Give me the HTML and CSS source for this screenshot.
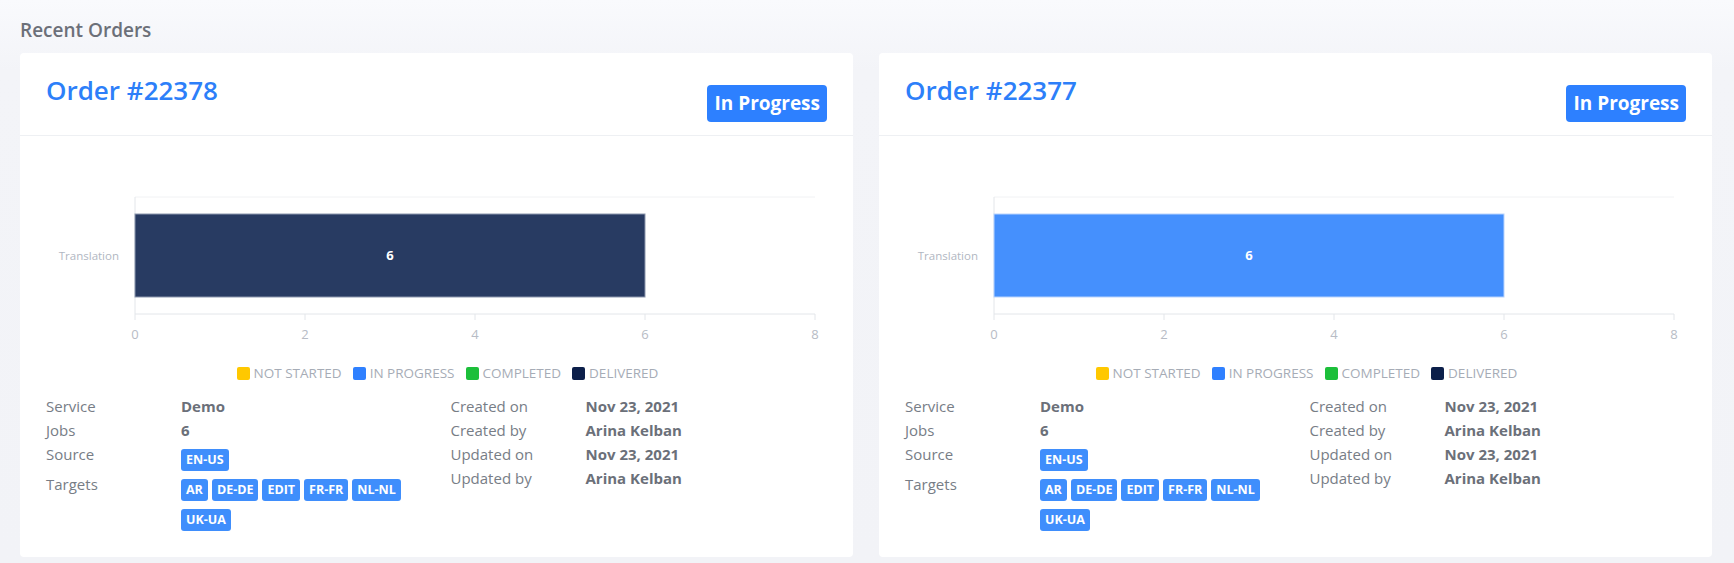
FILE: index.html
```html
<!DOCTYPE html>
<html>

<head>
	<title>Recent Orders</title>
	<link rel="stylesheet" href="styles.css">
</head>

<body>
	<h2 class="page-title">Recent Orders</h2>
	<div class="orders">
		<!-- заказ 22378 -->
		<div class="card">
			<div class="card-header">
				<h3 class="order-title">Order #22378</h3>
				<span class="status">In Progress</span>
			</div>
			<svg class="chart" viewBox="0 0 833 222" width="833" height="222">
				<line class="grid" x1="115" y1="59" x2="795" y2="59" />
				<line class="axis" x1="115" y1="59" x2="115" y2="176" />
				<rect x="115" y="76" width="510" height="83" fill="#283b62" stroke="#8c97ad" stroke-width="1" />
				<text class="bar-value" x="370" y="122">6</text>
				<text class="cat-label" x="99" y="122">Translation</text>
				<line class="axis" x1="115" y1="176" x2="795" y2="176" />
				<g class="ticks">
					<line x1="115" y1="176" x2="115" y2="182" />
					<line x1="285" y1="176" x2="285" y2="182" />
					<line x1="455" y1="176" x2="455" y2="182" />
					<line x1="625" y1="176" x2="625" y2="182" />
					<line x1="795" y1="176" x2="795" y2="182" />
				</g>
				<g class="tick-labels">
					<text x="115" y="201">0</text>
					<text x="285" y="201">2</text>
					<text x="455" y="201">4</text>
					<text x="625" y="201">6</text>
					<text x="795" y="201">8</text>
				</g>
			</svg>
			<div class="legend">
				<span class="legend-item"><i class="dot not-started"></i>NOT STARTED</span>
				<span class="legend-item"><i class="dot in-progress"></i>IN PROGRESS</span>
				<span class="legend-item"><i class="dot completed"></i>COMPLETED</span>
				<span class="legend-item"><i class="dot delivered"></i>DELIVERED</span>
			</div>
			<div class="details">
				<div class="info">
					<div class="label">Service</div>
					<div class="value">Demo</div>
					<div class="label">Jobs</div>
					<div class="value">6</div>
					<div class="label">Source</div>
					<div class="value tags"><span class="tag">EN-US</span></div>
					<div class="label">Targets</div>
					<div class="value tags">
						<span class="tag">AR</span><span class="tag">DE-DE</span><span class="tag">EDIT</span><span class="tag">FR-FR</span><span class="tag">NL-NL</span><span class="tag">UK-UA</span>
					</div>
				</div>
				<div class="info">
					<div class="label">Created on</div>
					<div class="value">Nov 23, 2021</div>
					<div class="label">Created by</div>
					<div class="value">Arina Kelban</div>
					<div class="label">Updated on</div>
					<div class="value">Nov 23, 2021</div>
					<div class="label">Updated by</div>
					<div class="value">Arina Kelban</div>
				</div>
			</div>
		</div>

		<!-- заказ 22377 -->
		<div class="card">
			<div class="card-header">
				<h3 class="order-title">Order #22377</h3>
				<span class="status">In Progress</span>
			</div>
			<svg class="chart" viewBox="0 0 833 222" width="833" height="222">
				<line class="grid" x1="115" y1="59" x2="795" y2="59" />
				<line class="axis" x1="115" y1="59" x2="115" y2="176" />
				<rect x="115" y="76" width="510" height="83" fill="#4590fd" stroke="#b9d4fd" stroke-width="1" />
				<text class="bar-value" x="370" y="122">6</text>
				<text class="cat-label" x="99" y="122">Translation</text>
				<line class="axis" x1="115" y1="176" x2="795" y2="176" />
				<g class="ticks">
					<line x1="115" y1="176" x2="115" y2="182" />
					<line x1="285" y1="176" x2="285" y2="182" />
					<line x1="455" y1="176" x2="455" y2="182" />
					<line x1="625" y1="176" x2="625" y2="182" />
					<line x1="795" y1="176" x2="795" y2="182" />
				</g>
				<g class="tick-labels">
					<text x="115" y="201">0</text>
					<text x="285" y="201">2</text>
					<text x="455" y="201">4</text>
					<text x="625" y="201">6</text>
					<text x="795" y="201">8</text>
				</g>
			</svg>
			<div class="legend">
				<span class="legend-item"><i class="dot not-started"></i>NOT STARTED</span>
				<span class="legend-item"><i class="dot in-progress"></i>IN PROGRESS</span>
				<span class="legend-item"><i class="dot completed"></i>COMPLETED</span>
				<span class="legend-item"><i class="dot delivered"></i>DELIVERED</span>
			</div>
			<div class="details">
				<div class="info">
					<div class="label">Service</div>
					<div class="value">Demo</div>
					<div class="label">Jobs</div>
					<div class="value">6</div>
					<div class="label">Source</div>
					<div class="value tags"><span class="tag">EN-US</span></div>
					<div class="label">Targets</div>
					<div class="value tags">
						<span class="tag">AR</span><span class="tag">DE-DE</span><span class="tag">EDIT</span><span class="tag">FR-FR</span><span class="tag">NL-NL</span><span class="tag">UK-UA</span>
					</div>
				</div>
				<div class="info">
					<div class="label">Created on</div>
					<div class="value">Nov 23, 2021</div>
					<div class="label">Created by</div>
					<div class="value">Arina Kelban</div>
					<div class="label">Updated on</div>
					<div class="value">Nov 23, 2021</div>
					<div class="label">Updated by</div>
					<div class="value">Arina Kelban</div>
				</div>
			</div>
		</div>
	</div>
</body>

</html>
```

FILE: styles.css
```css
body {
	margin: 0;
	padding: 19px 22px 0 20px;
	font-family: "Open Sans", "Liberation Sans", sans-serif;
	background: linear-gradient(#f9fafd 0, #f3f4f8 70px, #f2f3f7 100%);
	min-height: 563px;
	box-sizing: border-box;
}

/* заголовок страницы */
.page-title {
	margin: 0 0 11px;
	font-size: 19px;
	font-weight: 600;
	line-height: 23px;
	color: #6c7079;
}

.orders {
	display: grid;
	grid-template-columns: 1fr 1fr;
	gap: 26px;
}

.card {
	background-color: #fff;
	border-radius: 4px;
	padding-bottom: 25px;
}

.card-header {
	display: flex;
	justify-content: space-between;
	align-items: flex-start;
	height: 83px;
	box-sizing: border-box;
	padding: 22px 26px 0;
	border-bottom: 1px solid #eef0f3;
}

.order-title {
	margin: 0;
	font-size: 26px;
	font-weight: 600;
	line-height: 31px;
	color: #2d7ff9;
}

.status {
	margin-top: 10px;
	padding: 0 7px;
	height: 37px;
	line-height: 37px;
	font-size: 19px;
	font-weight: 700;
	color: #fff;
	background-color: #2d80ff;
	border-radius: 4px;
}

/* график */
.chart {
	display: block;
	width: 100%;
	height: 222px;
	margin-top: 2px;
	font-family: "Open Sans", sans-serif;
}

.chart .grid {
	stroke: #f1f2f4;
	stroke-width: 1;
}

.chart .axis,
.chart .ticks line {
	stroke: #e3e6ea;
	stroke-width: 1;
}

.bar-value {
	fill: #fff;
	font-size: 13px;
	font-weight: 700;
	text-anchor: middle;
}

.cat-label {
	fill: #b1b7c2;
	font-size: 11.5px;
	text-anchor: end;
}

.tick-labels text {
	fill: #b7bcc5;
	font-size: 13px;
	text-anchor: middle;
}

.legend {
	display: flex;
	justify-content: center;
	gap: 11px;
	margin-top: 5px;
	padding-left: 22px;
	height: 16px;
	align-items: center;
	font-size: 13.5px;
	color: #a6acb6;
}

.legend-item {
	display: flex;
	align-items: center;
	gap: 4px;
}

.dot {
	display: inline-block;
	width: 13px;
	height: 13px;
	border-radius: 2px;
}

.not-started {
	background-color: #ffc800;
}

.in-progress {
	background-color: #2f80ff;
}

.completed {
	background-color: #1cbf3a;
}

.delivered {
	background-color: #0c1f4a;
}

/* детали заказа */
.details {
	display: grid;
	grid-template-columns: 1fr 1fr;
	gap: 28px;
	margin-top: 13px;
	padding: 0 26px;
}

.info {
	display: grid;
	grid-template-columns: 135px 1fr;
	align-content: start;
	font-size: 15px;
	line-height: 24px;
}

.label {
	color: #777d86;
}

.value {
	color: #6b7079;
	font-weight: 700;
}

.tags {
	display: flex;
	flex-wrap: wrap;
	max-width: 240px;
}

.tag {
	margin: 7px 4px 1px 0;
	padding: 0 5px;
	height: 22px;
	line-height: 22px;
	font-size: 12.5px;
	font-weight: 700;
	color: #fff;
	background-color: #3f8efc;
	border-radius: 3px;
}
```
